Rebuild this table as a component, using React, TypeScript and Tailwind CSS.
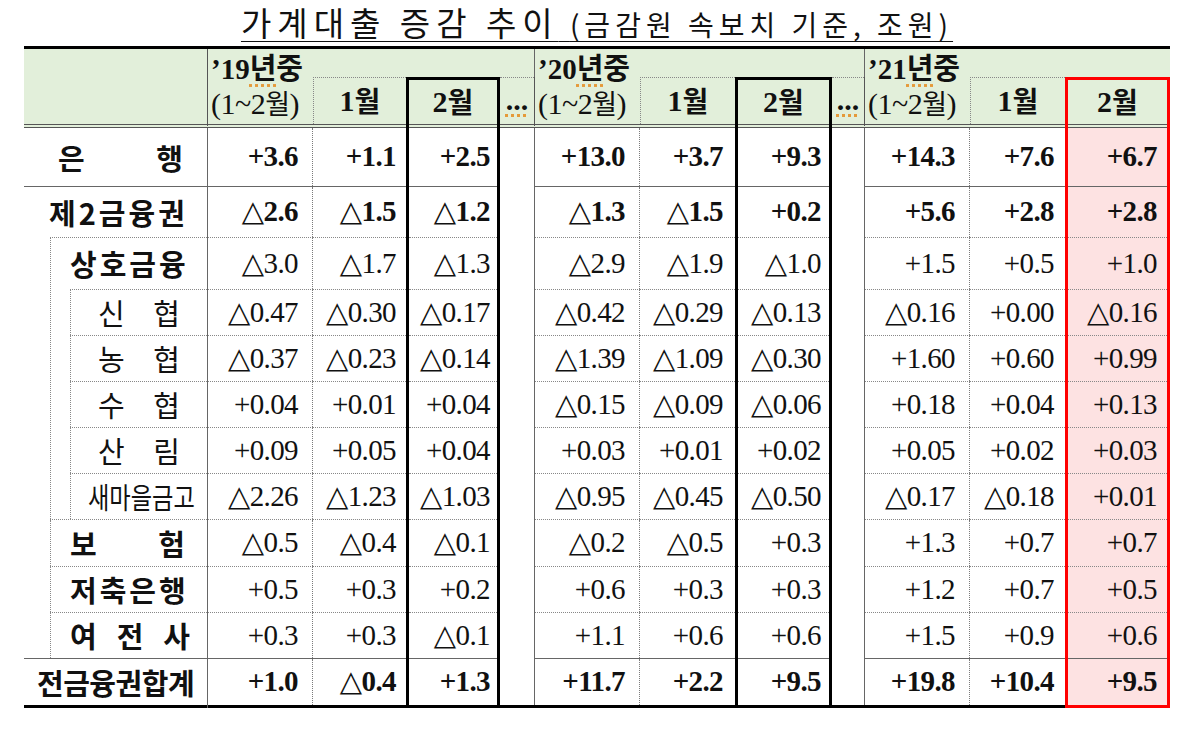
const GRID =
  "grid grid-cols-[184px_105px_93px_94px_35px_105px_95px_97px_33px_105px_95px_105px]";
const NUM = "font-['Liberation_Serif','DejaVu_Sans','Noto_Sans_CJK_KR',serif]";
const KR = "font-['Noto_Sans_CJK_KR','Noto_Sans',sans-serif]";

type Row = {
  label: string;
  level: 0 | 1 | 2;
  labelBold?: boolean;
  numBold?: boolean;
  spread?: boolean;
  squeeze?: string;
  pad: string;
  h: string;
  line: "solid" | "dotted" | "end";
  lineIndent?: string;
  vals: string[];
};

const rows: Row[] = [
  { label: "은행", level: 0, labelBold: true, numBold: true, spread: true, pad: "pl-[34px] pr-[24px]", h: "h-[59px]", line: "solid", vals: ["+3.6", "+1.1", "+2.5", "+13.0", "+3.7", "+9.3", "+14.3", "+7.6", "+6.7"] },
  { label: "제2금융권", level: 0, labelBold: true, numBold: true, pad: "pl-[25px]", h: "h-[51px]", line: "dotted", lineIndent: "ml-[26px]", vals: ["△2.6", "△1.5", "△1.2", "△1.3", "△1.5", "+0.2", "+5.6", "+2.8", "+2.8"] },
  { label: "상호금융", level: 1, labelBold: true, pad: "pl-[19px]", h: "h-[52px]", line: "dotted", lineIndent: "ml-[46px]", vals: ["△3.0", "△1.7", "△1.3", "△2.9", "△1.9", "△1.0", "+1.5", "+0.5", "+1.0"] },
  { label: "신협", level: 2, spread: true, pad: "pl-[27px] pr-[27px]", h: "h-[46px]", line: "dotted", lineIndent: "ml-[46px]", vals: ["△0.47", "△0.30", "△0.17", "△0.42", "△0.29", "△0.13", "△0.16", "+0.00", "△0.16"] },
  { label: "농협", level: 2, spread: true, pad: "pl-[27px] pr-[27px]", h: "h-[46px]", line: "dotted", lineIndent: "ml-[46px]", vals: ["△0.37", "△0.23", "△0.14", "△1.39", "△1.09", "△0.30", "+1.60", "+0.60", "+0.99"] },
  { label: "수협", level: 2, spread: true, pad: "pl-[27px] pr-[27px]", h: "h-[46px]", line: "dotted", lineIndent: "ml-[46px]", vals: ["+0.04", "+0.01", "+0.04", "△0.15", "△0.09", "△0.06", "+0.18", "+0.04", "+0.13"] },
  { label: "산림", level: 2, spread: true, pad: "pl-[27px] pr-[27px]", h: "h-[46px]", line: "dotted", lineIndent: "ml-[46px]", vals: ["+0.09", "+0.05", "+0.04", "+0.03", "+0.01", "+0.02", "+0.05", "+0.02", "+0.03"] },
  { label: "새마을금고", level: 2, squeeze: "scale-x-[0.8] tracking-[0px]", pad: "pl-[17px]", h: "h-[46px]", line: "dotted", lineIndent: "ml-[26px]", vals: ["△2.26", "△1.23", "△1.03", "△0.95", "△0.45", "△0.50", "△0.17", "△0.18", "+0.01"] },
  { label: "보험", level: 1, labelBold: true, spread: true, pad: "pl-[19px] pr-[22px]", h: "h-[47px]", line: "dotted", lineIndent: "ml-[26px]", vals: ["△0.5", "△0.4", "△0.1", "△0.2", "△0.5", "+0.3", "+1.3", "+0.7", "+0.7"] },
  { label: "저축은행", level: 1, labelBold: true, pad: "pl-[19px]", h: "h-[46px]", line: "dotted", lineIndent: "ml-[26px]", vals: ["+0.5", "+0.3", "+0.2", "+0.6", "+0.3", "+0.3", "+1.2", "+0.7", "+0.5"] },
  { label: "여전사", level: 1, labelBold: true, spread: true, pad: "pl-[19px] pr-[17px]", h: "h-[46px]", line: "solid", vals: ["+0.3", "+0.3", "△0.1", "+1.1", "+0.6", "+0.6", "+1.5", "+0.9", "+0.6"] },
  { label: "전금융권합계", level: 0, labelBold: true, numBold: true, squeeze: "tracking-[-0.5px]", pad: "pl-[13px]", h: "h-[49px]", line: "end", vals: ["+1.0", "△0.4", "+1.3", "+11.7", "+2.2", "+9.5", "+19.8", "+10.4", "+9.5"] },
];

type Col = { kind: "num" | "gap" | "box"; right?: string; box?: string; pr?: string; red?: boolean };

const DOT_R = "border-r border-dotted border-[#7a7a7a]";
const SOLID_R = "border-r border-[#666]";

const cols: Col[] = [
  { kind: "num", right: DOT_R, pr: "pr-[14px]" },
  { kind: "num", pr: "pr-[10px]" },
  { kind: "box", box: "border-x-[3px] border-black", pr: "pr-[7px]" },
  { kind: "gap", right: SOLID_R },
  { kind: "num", right: DOT_R, pr: "pr-[14px]" },
  { kind: "num", pr: "pr-[12px]" },
  { kind: "box", box: "border-x-[3px] border-black", pr: "pr-[8px]" },
  { kind: "gap", right: SOLID_R },
  { kind: "num", right: DOT_R, pr: "pr-[14px]" },
  { kind: "num", pr: "pr-[11px]" },
  { kind: "box", box: "border-x-[3px] border-[#f00] bg-[#fde2e2]", pr: "pr-[10px]", red: true },
];

function bottomLine(line: Row["line"], red?: boolean) {
  if (line === "solid") return "border-b border-[#666]";
  if (line === "dotted") return "border-b border-dotted border-[#888]";
  return red ? "border-b-[3px] border-[#f00]" : "border-b-[3px] border-black";
}

function LabelCell({ r }: { r: Row }) {
  const text = r.spread ? (
    <div className="flex flex-1 justify-between">
      {r.label.split("").map((c, i) => (
        <span key={i}>{c}</span>
      ))}
    </div>
  ) : (
    <span className={`inline-block origin-left whitespace-nowrap ${r.squeeze ?? "tracking-[3px]"}`}>{r.label}</span>
  );

  const bottom =
    r.line === "end"
      ? "border-t-[3px] border-black"
      : r.line === "solid"
        ? "border-t border-[#666]"
        : `border-t border-dotted border-[#888] ${r.lineIndent ?? ""}`;

  return (
    <div className={`flex flex-col ${SOLID_R} ${KR} text-[29px] leading-none text-[#111] ${r.labelBold ? "font-bold" : "font-normal"}`}>
      <div className="flex flex-1">
        {r.level >= 1 && <div className="w-[26px] shrink-0" />}
        <div className={`flex flex-1 ${r.level >= 1 ? "border-l border-dotted border-[#888]" : ""}`}>
          {r.level === 2 && <div className="w-[19px] shrink-0" />}
          <div className={`flex flex-1 items-center ${r.level === 2 ? "border-l border-dotted border-[#888]" : ""} ${r.pad}`}>
            {text}
          </div>
        </div>
      </div>
      <div className={`h-0 ${bottom}`} />
    </div>
  );
}

function BodyRow({ r }: { r: Row }) {
  let vi = 0;
  return (
    <div className={`${GRID} ${r.h}`}>
      <LabelCell r={r} />
      {cols.map((c, i) => {
        if (c.kind === "gap") {
          return (
            <div key={i} className={r.line === "end" ? bottomLine("end") : ""}>
              <div className={`h-full ${c.right}`} />
            </div>
          );
        }
        const v = r.vals[vi++];
        const inner = `flex h-full items-center justify-end ${c.pr} ${NUM} text-[29px] tracking-[-0.6px] text-[#111] ${r.numBold ? "font-bold" : "font-normal"}`;
        if (c.kind === "box") {
          return (
            <div key={i} className={c.box}>
              <div className={`${inner} ${bottomLine(r.line, c.red)}`}>{v}</div>
            </div>
          );
        }
        return (
          <div key={i} className={bottomLine(r.line)}>
            <div className={`${inner} ${c.right ?? ""}`}>{v}</div>
          </div>
        );
      })}
    </div>
  );
}

const DOUBLE_B = "border-b-4 border-double border-[#555]";

function YearHead({ year }: { year: string }) {
  return (
    <div className={`row-span-2 flex flex-col pl-[3px] pt-[2px] ${DOUBLE_B} ${NUM} text-[#111]`}>
      <div className="h-[31px] text-[29px] font-bold leading-[31px] whitespace-nowrap">
        ’{year}
        <span className={`${KR} underline decoration-dotted decoration-[#e59a3a] underline-offset-[5px]`}>년</span>
        <span className={KR}>중</span>
      </div>
      <div className="text-[30px] leading-[42px] whitespace-nowrap tracking-[-0.5px]">
        (1~2<span className={`${KR} text-[27px]`}>월</span>)
      </div>
    </div>
  );
}

function MonthHead({ m }: { m: string }) {
  return (
    <div className={DOUBLE_B}>
      <div className={`flex h-full items-center justify-center border-l border-t border-dotted border-[#888] pb-[2px] ${NUM} text-[30px] font-bold text-[#111]`}>
        {m}
        <span className={`${KR} text-[28px]`}>월</span>
      </div>
    </div>
  );
}

function BoxHead({ red }: { red?: boolean }) {
  return (
    <div className={`border-x-[3px] border-t-[3px] ${red ? "border-[#f00]" : "border-black"}`}>
      <div className={`flex h-full items-center justify-center pb-[2px] ${DOUBLE_B} ${NUM} text-[30px] font-bold text-[#111]`}>
        2<span className={`${KR} text-[28px]`}>월</span>
      </div>
    </div>
  );
}

function DotsHead() {
  return (
    <div className={`border-r ${DOUBLE_B}`}>
      <div className={`flex h-full items-end justify-center border-t border-dotted border-[#888] pb-[9px] ${NUM} text-[30px] font-bold leading-none text-[#111]`}>
        <span className="underline decoration-dotted decoration-[#e59a3a] underline-offset-[4px]">...</span>
      </div>
    </div>
  );
}

export default function App() {
  return (
    <div className="min-h-[733px] w-[1200px] bg-white">
      <div className="ml-[24px] flex h-[46px] w-[1146px] items-start justify-center">
        <h1 className={`${KR} text-[#111] leading-[44px] underline decoration-1 underline-offset-[5px] whitespace-nowrap`}>
          <span className="text-[33px] tracking-[6px]">가계대출 증감 추이</span>
          <span className="text-[28px] tracking-[5px]">{"\u00a0"}(금감원 속보치 기준, 조원)</span>
        </h1>
      </div>

      <div className="ml-[24px] w-[1146px]">
        <div className={`${GRID} grid-rows-[28px_51px] border-t-[3px] border-black bg-[#e2efda]`}>
          <div className={`row-span-2 border-r ${DOUBLE_B}`} />
          <YearHead year="19" />
          <div />
          <div />
          <div className={SOLID_R} />
          <YearHead year="20" />
          <div />
          <div />
          <div className={SOLID_R} />
          <YearHead year="21" />
          <div />
          <div />

          <MonthHead m="1" />
          <BoxHead />
          <DotsHead />
          <MonthHead m="1" />
          <BoxHead />
          <DotsHead />
          <MonthHead m="1" />
          <BoxHead red />
        </div>

        {rows.map((r) => (
          <BodyRow key={r.label} r={r} />
        ))}
      </div>
    </div>
  );
}
